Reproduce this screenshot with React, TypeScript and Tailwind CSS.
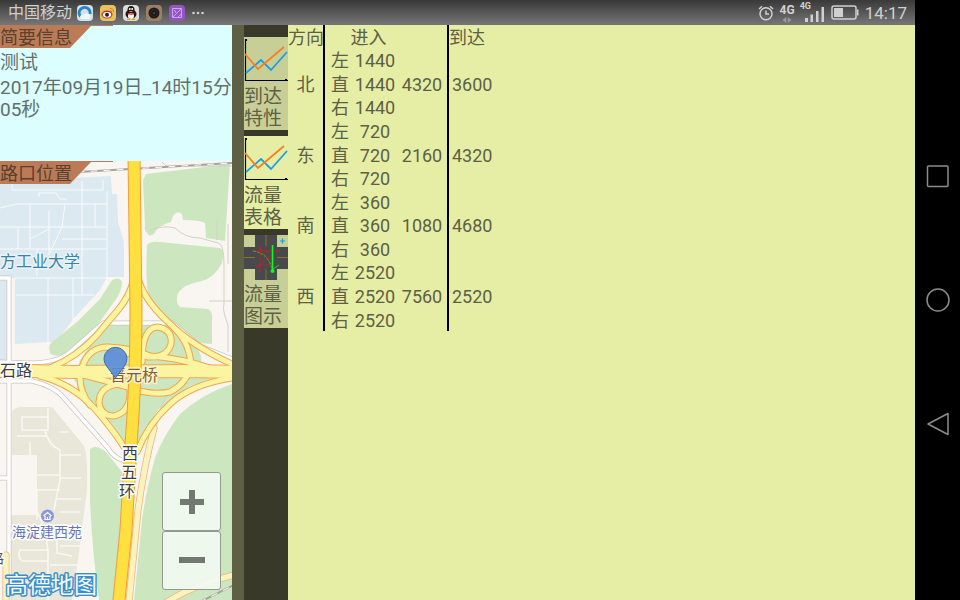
import React, { useState } from "react";

const FONT = "font-[Roboto,'Noto_Sans_CJK_SC',sans-serif]";

const flows = [
  { dir: "北", turns: [["左", 1440], ["直", 1440], ["右", 1440]], total: 4320, arrive: 3600 },
  { dir: "东", turns: [["左", 720], ["直", 720], ["右", 720]], total: 2160, arrive: 4320 },
  { dir: "南", turns: [["左", 360], ["直", 360], ["右", 360]], total: 1080, arrive: 4680 },
  { dir: "西", turns: [["左", 2520], ["直", 2520], ["右", 2520]], total: 7560, arrive: 2520 },
];

function AppIcons() {
  return (
    <div className="flex items-center gap-[7px]" aria-hidden="true">
      <svg className="size-4" viewBox="0 0 16 16">
        <rect width="16" height="16" rx="4" fill="#d5dfe6" />
        <path d="M3.500 11.500A5.500 5.500 0 1 1 13 9" fill="none" stroke="#2583c9" strokeWidth="2.800" />
        <path d="M3 12a3 3 0 0 1 3.500-2.500 4 4 0 0 1 5-.5 3 3 0 0 1 1 5H5a2.500 2.500 0 0 1-2-2z" fill="#f2f5f7" />
      </svg>
      <svg className="size-4" viewBox="0 0 16 16">
        <rect width="16" height="16" rx="4" fill="#e6c35b" />
        <ellipse cx="7" cy="9.500" rx="5.500" ry="4" fill="#c9302c" />
        <ellipse cx="7" cy="9.700" rx="4.200" ry="2.800" fill="#fff" />
        <circle cx="7" cy="9.700" r="2" fill="#222" />
        <path d="M10 3.500q3.500-.5 3.500 3.500M10.300 5.500q1.500 0 1.500 1.500" stroke="#df7b20" fill="none" />
      </svg>
      <svg className="size-4" viewBox="0 0 16 16">
        <rect width="16" height="16" rx="4" fill="#dcdcdc" />
        <ellipse cx="8" cy="9" rx="5.500" ry="4.500" fill="#161616" />
        <ellipse cx="8" cy="5" rx="3.500" ry="4" fill="#161616" />
        <ellipse cx="8" cy="11" rx="3" ry="3" fill="#fff" />
        <circle cx="6.800" cy="4" r="1" fill="#fff" />
        <circle cx="9.200" cy="4" r="1" fill="#fff" />
        <path d="M4.500 7.500q3.500 1.800 7 0v1.300q-3.500 1.800-7 0z" fill="#d22" />
        <path d="M5.500 6h5L8 7.300zM4 13.500h3.500v1.500H4zM8.500 13.500H12v1.500H8.500z" fill="#e9a21e" />
      </svg>
      <svg className="size-4" viewBox="0 0 16 16">
        <rect width="16" height="16" rx="4" fill="#9b8164" />
        <circle cx="8" cy="8" r="5.500" fill="#1d1a19" />
        <circle cx="8" cy="8" r="3.500" fill="none" stroke="#2d2723" />
        <circle cx="8" cy="8" r="1" fill="#54483c" />
      </svg>
      <svg className="size-4" viewBox="0 0 16 16">
        <rect width="16" height="16" rx="4" fill="#9355c5" />
        <path d="M3.500 3.500h9v9h-9zM4 12l8-8M5 5.500q2 0 1.500 2M9 12l3.500-3" fill="none" stroke="#d9bdf0" strokeWidth=".8" />
      </svg>
      <svg className="h-4 w-3" viewBox="0 0 12 16" fill="#d0d0d0">
        <circle cx="1.500" cy="8" r="1.300" />
        <circle cx="6" cy="8" r="1.300" />
        <circle cx="10.500" cy="8" r="1.300" />
      </svg>
    </div>
  );
}

function StatusBar() {
  return (
    <header className="flex h-[25px] shrink-0 items-center justify-between bg-linear-to-b from-[#393939] to-[#777777] pr-2 pl-2 text-[#d0d0d0]">
      <div className="flex items-center gap-[5px]">
        <span className="pt-px text-[16px] leading-6">中国移动</span>
        <AppIcons />
      </div>
      <div className="flex items-center gap-[6px]">
        <svg className="h-4 w-4" viewBox="0 0 16 16" fill="none" stroke="#d0d0d0" strokeWidth="1.500" aria-hidden="true">
          <circle cx="8" cy="8.800" r="6" />
          <path d="M8 5.500v3.500h3M1 4l3-2.800M15 4l-3-2.800" />
        </svg>
        <div className="flex h-5 flex-col items-center text-[12px] leading-[14px] font-bold">
          4G
          <svg className="h-[6px] w-[10px]" viewBox="0 0 10 6" fill="#999" aria-hidden="true">
            <path d="M4.300 0v6L.5 3zM5.700 0v6l3.800-3z" />
          </svg>
        </div>
        <div className="relative h-5 w-6">
          <span className="absolute -top-px -left-px text-[9px] leading-[9px] font-bold">4G</span>
          <svg className="size-full" viewBox="0 0 24 20" fill="#d0d0d0" aria-hidden="true">
            <path d="M4 15h3v4H4zM9.500 11.500h2.500V19H9.500zM15 8h2.500v11H15zM20.500 4H23v15h-2.500z" />
          </svg>
        </div>
        <svg className="h-[15px] w-7" viewBox="0 0 28 15" aria-hidden="true">
          <rect x="1" y="1" width="24" height="13" rx="2" fill="none" stroke="#d0d0d0" strokeWidth="1.500" />
          <path d="M26 4.500h1.500v6H26z" fill="#d0d0d0" />
          <rect x="3" y="3" width="9" height="9" fill="#d0d0d0" />
        </svg>
        <time className="pt-px text-[17px] leading-6">14:17</time>
      </div>
    </header>
  );
}

function Banner({ children }: { children: string }) {
  return (
    <h2 className="relative h-[23px] w-[113px] text-[18px] leading-[25px] font-normal text-[#59402f]">
      <svg className="absolute inset-0 size-full" viewBox="0 0 113 23" aria-hidden="true">
        <path d="M0 0h113v1H91L70 23H0z" fill="#bb7b57" />
      </svg>
      <span className="relative">{children}</span>
    </h2>
  );
}

const ramps = [
  "M134 278Q130 296 118 310L96 336Q78 356 52 367",
  "M138 278Q144 300 168 322Q192 346 232 364",
  "M40 376Q72 384 94 408Q112 428 126 450",
  "M232 378Q192 384 170 404Q148 424 137 452",
  "M82 368Q88 347 108 347Q132 348 150 356Q180 358 210 368",
  "M176 330Q190 344 191 366Q186 384 170 392Q150 396 128 387L84 375",
  "M80 378Q80 392 90 405",
  "M142 362Q142 327 158 327Q173 330 171 344Q167 358 148 357L120 352",
  "M130 384Q100 382 99 402Q100 416 114 416Q131 412 130 390",
];

function CityMap() {
  return (
    <svg
      className="absolute inset-0 size-full"
      viewBox="0 161 232 439"
      preserveAspectRatio="xMinYMin slice"
      role="img"
      aria-label="路口位置"
    >
      <rect y="161" width="232" height="439" fill="#f9f6f1" />
      <path d="M0 184L72 178L111 176L112 194H117L118 222L124 242V277H107L100 290L74 318Q60 338 52 342L15 344V278H0zM0 278H8V362H0z" fill="#dce9f0" />
      <path
        d="M12 182V190H103V180M0 208L16 204H107M30 204V248M49 211V255L62 227L65 204M82 181V294M95 204V227M107 191V295M0 227H107M18 227V249M30 239L49 229M0 249H107M37 249V276M62 239H107M15 278H124M48 278V344M73 278V320M16 295H94M39 197V193H56L60 199H67"
        fill="none" stroke="#f7fbfd" strokeWidth="1"
      />
      <g fill="#cce7bf">
        <path d="M146 174L230 164L225 241L206 238L205 223Q200 220 183 220L182 214Q177 210 173 216L171 222Q157 226 154 234L150 236Q143 230 145 226L143 180z" />
        <path d="M147 245Q150 241 160 242L220 248Q225 250 222 263Q214 278 202 281Q184 284 178 293Q175 302 180 307L208 309Q213 311 212 320V344L200 343L170 320L150 300Q145 290 147 245z" />
        <path d="M112 280Q120 276 122 282Q122 292 114 302L94 330Q76 346 68 354Q54 358 50 353Q47 343 56 339L78 321L100 299z" />
        <path d="M105 324H172L196 346Q204 358 200 364L228 372L190 386L158 410L131 452L112 424L74 380L80 360z" />
        <path d="M232 384Q202 394 180 414Q162 438 155 458Q146 490 142 520L134 600H232z" />
        <path d="M90 449Q96 444 106 452L122 472V540L114 600H99Q92 550 90 500z" />
      </g>
      <path d="M12 412Q14 407 22 407H52L84 446Q88 455 87 490L78 560L72 600H11V515H37V455H12z" fill="#e9e7da" />
      <path
        d="M22 417H48V430H22zM48 408V425M45 430Q48 445 60 450V480Q58 490 54 510M17 436H46M30 442V455M60 455H81M37 475H60M37 490H60M57 499H81M60 478H81M60 512H80M38 513Q46 530 48 550V600M48 550H20Q17 556 22 561H48M57 535V553L72 556M50 565H83M60 546H80M60 432H68M37 489V520"
        fill="none" stroke="#faf8f2" strokeWidth="1.500"
      />
      <path d="M150 230Q165 225 175 228Q185 238 200 238L218 243Q224 244 224 264V304Q222 310 228 325V352M217 220V240M228 224V264M162 162L166 166H232M209 301H232M174 384Q160 402 156 428L148 440" fill="none" stroke="#d5cfc8" strokeWidth="1" />
      <g fill="none" strokeLinecap="round">
        <path d="M0 362L28 363Q58 363 70 352L103 323H172L200 346L232 359M0 381H32Q54 386 64 398L108 448Q116 462 134 462M0 278H9V600M0 478H9" stroke="#c9c5bf" strokeWidth="5" />
        <path d="M0 362L28 363Q58 363 70 352L103 323H172L200 346L232 359M0 381H32Q54 386 64 398L108 448Q116 462 134 462M0 278H9V600M0 478H9" stroke="#fff" strokeWidth="3.500" />
        <path d="M78 172L130 169L232 163M200 602L232 586" stroke="#a6a39f" strokeWidth="2" />
        <path d="M78 172L130 169L232 163M200 602L232 586" stroke="#fff" strokeWidth="1" strokeDasharray="6 7" />
        <path d="M154 428Q144 466 138 510L129 602M164 604Q190 586 234 575M6 555V602" stroke="#f0b27c" strokeWidth="7" />
        <path d="M154 428Q144 466 138 510L129 602M164 604Q190 586 234 575M6 555V602" stroke="#fbf3bd" strokeWidth="5.500" />
        {ramps.map((d) => <path key={d} d={d} stroke="#f2a54a" strokeWidth="7" />)}
        <path d="M-8 371H28L74 372L180 371L240 372" stroke="#f2a54a" strokeWidth="14" />
        {ramps.map((d) => <path key={d} d={d} stroke="#fbf5a2" strokeWidth="5" />)}
        <path d="M-8 371H28L74 372L180 371L240 372" stroke="#fbf5a2" strokeWidth="12" />
        <path d="M134 155L136 310Q136 380 131 445L126 530L118 610" stroke="#f39a3a" strokeWidth="13" />
        <path d="M134 155L136 310Q136 380 131 445L126 530L118 610" stroke="#ffe040" strokeWidth="11" />
      </g>
      <g stroke="#fff" strokeWidth="3" strokeLinejoin="round" style={{ paintOrder: "stroke" }}>
        <text x="0" y="267" fontSize="16" fill="#3c81ab" stroke="#eaf3f8">方工业大学</text>
        <g fontSize="16" fill="#3f3c3a">
          <text x="0" y="376">石</text>
          <text x="16" y="376">路</text>
          <text x="122" y="459">西</text>
          <text x="121" y="478">五</text>
          <text x="119" y="497">环</text>
        </g>
        <text x="-10" y="563" fontSize="14" fill="#55504c">路</text>
        <text x="110" y="381" fontSize="16" fill="#80602a" stroke="#fbf3cf">晋元桥</text>
        <text x="12" y="537" fontSize="14" fill="#6673b8">海淀建西苑</text>
        <text x="5" y="593" fontSize="23" fontWeight="400" fill="#f4fafd" stroke="#3c8ec8">高德地图</text>
      </g>
      <circle cx="47.500" cy="516" r="6.500" fill="#8b96d6" />
      <path d="M43.500 516l4-3.500 4 3.500M45 516v3.500h5V516M47.500 517v2.500" fill="none" stroke="#fff" strokeWidth="1.200" />
      <path d="M115.500 378L106.500 366A11.500 11.500 0 1 1 124.500 366z" fill="#5b8dd9" fillOpacity=".92" stroke="#3d6cb5" strokeWidth="1" />
    </svg>
  );
}

function ZoomControls() {
  const button = "flex h-[59px] w-[59px] items-center justify-center rounded-[3px] border border-[#929a90] bg-[#f2faf2]/90";
  return (
    <div className="absolute right-[11px] bottom-[10px] flex flex-col">
      <button className={button} aria-label="放大">
        <svg className="size-[26px]" viewBox="0 0 26 26" fill="#737873"><path d="M10 1h6v9h9v6h-9v9h-6v-9H1v-6h9z" /></svg>
      </button>
      <button className={button} aria-label="缩小">
        <svg className="size-[26px]" viewBox="0 0 26 26" fill="#737873"><path d="M0 9h26v6H0z" /></svg>
      </button>
    </div>
  );
}

function ChartIcon() {
  return (
    <svg className="h-[45px] w-[44px]" viewBox="0 0 44 45" fill="none" aria-hidden="true">
      <path d="M1.500 2V43.500H44" stroke="#000" strokeWidth="1.200" />
      <path d="M1 2h2v2H1zM41 42h2v1.500h-2z" fill="#000" />
      <path d="M2 36L17 23L27 33L43 15" stroke="#189fe8" strokeWidth="1.800" />
      <path d="M1 17L14 32L40 10" stroke="#f58025" strokeWidth="1.800" />
    </svg>
  );
}

function JunctionIcon() {
  return (
    <svg className="h-[45px] w-[44px]" viewBox="0 0 44 45" fill="none" aria-hidden="true">
      <path d="M11 0h22v12h11v22H33v11H11V34H0V12h11z" fill="#48494b" />
      <path d="M22 0v11M22 34v11M0 22.500h11M33 22.500h11" stroke="#8d702a" />
      <path d="M16 10v27M8 16h28M15 12l17 22M12 33l20-16M13 30h18" stroke="#c91f23" strokeWidth="1" strokeDasharray="5 1" />
      <path d="M9 16Q24 18 28 34" stroke="#18c73b" strokeDasharray="3 1" />
      <path d="M28.500 10v26" stroke="#0f2" strokeWidth="1.500" />
      <circle cx="28.500" cy="36" r="2" fill="#0f2" />
      <path d="M29 34l6-4" stroke="#18c73b" />
      <path d="M36 6h5M38.500 3.500v5" stroke="#189fd8" strokeWidth="1.200" />
    </svg>
  );
}

const tabs = [
  { lines: ["到达", "特性"], Icon: ChartIcon },
  { lines: ["流量", "表格"], Icon: ChartIcon },
  { lines: ["流量", "图示"], Icon: JunctionIcon },
];

function FlowTable() {
  const cell = "p-0 pt-[2px] font-normal whitespace-nowrap";
  const ruled = "border-r-2 border-black";
  return (
    <table className="h-[306px] w-[209px] table-fixed border-separate border-spacing-0 text-center text-[18px] leading-[21px] text-[#5d6045]">
      <colgroup>
        <col className="w-[37px]" />
        <col className="w-[28px]" />
        <col className="w-[44px]" />
        <col className="w-[52px]" />
        <col className="w-[48px]" />
      </colgroup>
      <thead>
        <tr>
          <th scope="col" className={`${cell} ${ruled} text-left`}>方向</th>
          <th scope="col" colSpan={2} className={`${cell} pl-[15px]`}>进入</th>
          <td className={`${cell} ${ruled}`} />
          <th scope="col" className={`${cell} text-left`}>到达</th>
        </tr>
      </thead>
      <tbody>
        {flows.map((flow) =>
          flow.turns.map(([turn, count], i) => (
            <tr key={flow.dir + turn}>
              {i === 0 && <th rowSpan={3} scope="rowgroup" className={`${cell} ${ruled}`}>{flow.dir}</th>}
              <td className={`${cell} pl-[6px] text-left`}>{turn}</td>
              <td className={cell}>{count}</td>
              {i === 0 && <td rowSpan={3} className={`${cell} ${ruled}`}>{flow.total}</td>}
              {i === 0 && <td rowSpan={3} className={`${cell} pl-[3px] text-left`}>{flow.arrive}</td>}
            </tr>
          )),
        )}
      </tbody>
    </table>
  );
}

function SystemNav() {
  return (
    <nav className="flex w-[45px] shrink-0 flex-col items-center justify-center gap-[100px] bg-black">
      <button aria-label="最近任务">
        <svg className="size-6" viewBox="0 0 24 24" fill="none" stroke="#8c8c8c" strokeWidth="1.500"><rect x="1.500" y="2" width="20.500" height="20.500" rx="1" /></svg>
      </button>
      <button aria-label="主屏幕">
        <svg className="size-6" viewBox="0 0 24 24" fill="none" stroke="#8c8c8c" strokeWidth="1.500"><circle cx="12" cy="12" r="11" /></svg>
      </button>
      <button aria-label="返回">
        <svg className="size-6" viewBox="0 0 24 24" fill="none" stroke="#8c8c8c" strokeWidth="1.500" strokeLinejoin="round"><path d="M22 1.500v21L2 12z" /></svg>
      </button>
    </nav>
  );
}

export default function App() {
  const [active, setActive] = useState(1);
  return (
    <div className={`flex h-screen w-full overflow-hidden ${FONT}`}>
      <div className="flex min-w-0 flex-1 flex-col">
        <StatusBar />
        <div className="flex min-h-0 flex-1">
          <aside className="flex w-[232px] shrink-0 flex-col">
            <section className="h-[136px] shrink-0 bg-[#dcfefe]">
              <Banner>简要信息</Banner>
              <div className="pt-1 text-[19px] leading-[22px] whitespace-nowrap text-[#5f706d]">
                <p className="pb-[3px]">测试</p>
                <p>2017年09月19日_14时15分<br />05秒</p>
              </div>
            </section>
            <section className="relative min-h-0 flex-1 overflow-hidden">
              <CityMap />
              <Banner>路口位置</Banner>
              <ZoomControls />
            </section>
          </aside>
          <div className="w-3 shrink-0 bg-[#5d6043]" />
          <nav className="flex w-[44px] shrink-0 flex-col gap-[6px] bg-[#39392a] pt-3">
            {tabs.map(({ lines, Icon }, i) => (
              <button
                key={lines.join("")}
                onClick={() => setActive(i)}
                className={`flex h-[93px] flex-col text-left text-[19px] leading-[22px] text-[#5d6045] ${active === i ? "bg-[#e6eea6]" : "bg-[#c7cf96]"}`}
              >
                <Icon />
                <span className="pt-1">{lines[0]}<br />{lines[1]}</span>
              </button>
            ))}
          </nav>
          <main className="min-w-0 flex-1 bg-[#e6eea6]">
            <FlowTable />
          </main>
        </div>
      </div>
      <SystemNav />
    </div>
  );
}
